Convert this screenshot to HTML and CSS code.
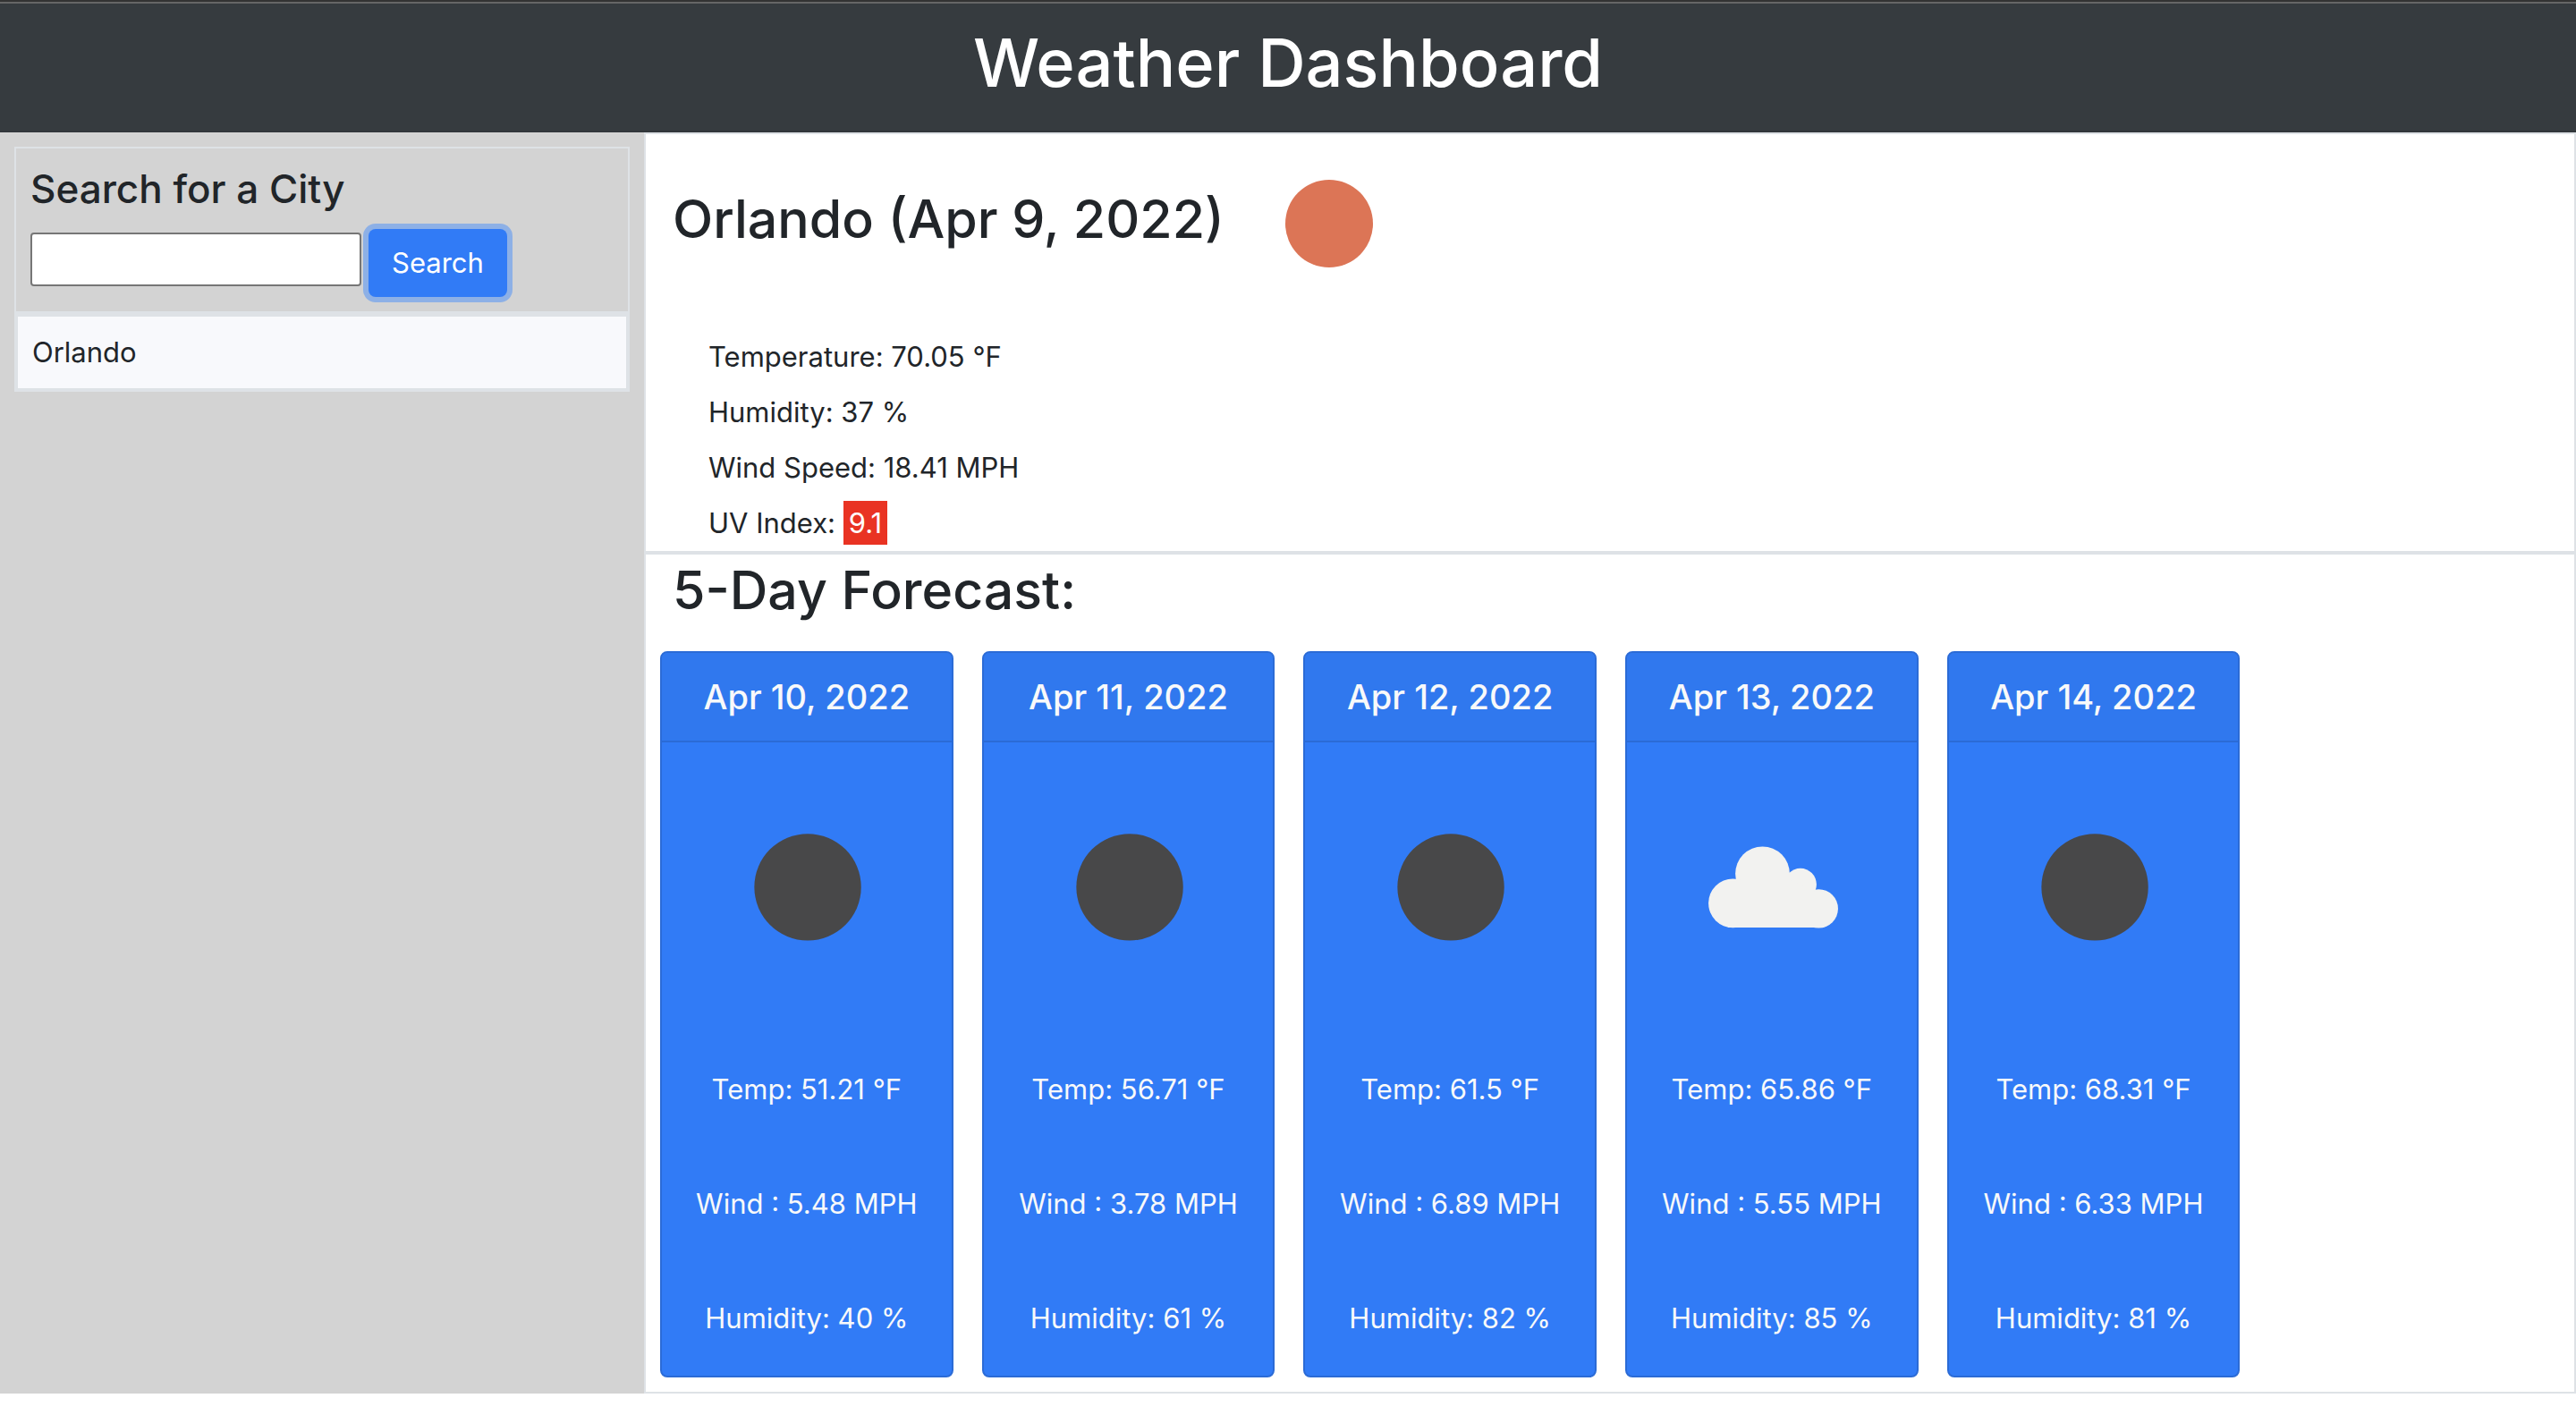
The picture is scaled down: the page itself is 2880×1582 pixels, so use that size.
FILE: index.html
```html
<!DOCTYPE html>
<html lang="en">
<head>
  <meta charset="utf-8">
  <meta name="viewport" content="width=device-width, initial-scale=1">
  <title>Weather Dashboard</title>
  <link rel="stylesheet" href="styles.css">
</head>
<body>
  <svg width="0" height="0" class="sprite" aria-hidden="true">
    <symbol id="disc" viewBox="0 0 200 200">
      <circle cx="101" cy="100" r="49"/>
    </symbol>
    <symbol id="cloud" viewBox="0 0 200 200">
      <g transform="translate(33.7 49.3) scale(.274)">
        <circle cx="211" cy="140" r="91"/>
        <circle cx="112" cy="239" r="82"/>
        <circle cx="338" cy="176" r="54"/>
        <circle cx="399" cy="257" r="65"/>
        <path d="M125 160H300L385 200V250L418 320H95L112 240Z"/>
      </g>
    </symbol>
  </svg>

  <header class="page-header">
    <h1>Weather Dashboard</h1>
  </header>

  <div class="layout">
    <aside class="sidebar">
      <form class="search">
        <label class="search-title" for="city">Search for a City</label>
        <div class="search-row">
          <input class="search-input" id="city" type="text">
          <button class="search-button" type="button">Search</button>
        </div>
      </form>
      <ul class="history">
        <li><button class="history-item" type="button">Orlando</button></li>
      </ul>
    </aside>

    <main class="content">
      <section class="current">
        <h2 class="city">Orlando (Apr 9, 2022) <svg class="city-icon clear-day" role="img" aria-label="Clear sky"><use href="#disc"/></svg></h2>
        <ul class="readings">
          <li>Temperature: 70.05 °F</li>
          <li>Humidity: 37 %</li>
          <li>Wind Speed: 18.41 MPH</li>
          <li>UV Index: <span class="uv">9.1</span></li>
        </ul>
      </section>

      <section class="forecast">
        <h2 class="forecast-title">5-Day Forecast:</h2>
        <div class="cards">
          <article class="card">
            <h3 class="card-header">Apr 10, 2022</h3>
            <div class="card-body">
              <svg class="card-icon clear-night" viewBox="0 0 200 200" role="img" aria-label="Clear sky"><use href="#disc"/></svg>
              <p>Temp: 51.21 °F</p>
              <p>Wind : 5.48 MPH</p>
              <p>Humidity: 40 %</p>
            </div>
          </article>
          <article class="card">
            <h3 class="card-header">Apr 11, 2022</h3>
            <div class="card-body">
              <svg class="card-icon clear-night" viewBox="0 0 200 200" role="img" aria-label="Clear sky"><use href="#disc"/></svg>
              <p>Temp: 56.71 °F</p>
              <p>Wind : 3.78 MPH</p>
              <p>Humidity: 61 %</p>
            </div>
          </article>
          <article class="card">
            <h3 class="card-header">Apr 12, 2022</h3>
            <div class="card-body">
              <svg class="card-icon clear-night" viewBox="0 0 200 200" role="img" aria-label="Clear sky"><use href="#disc"/></svg>
              <p>Temp: 61.5 °F</p>
              <p>Wind : 6.89 MPH</p>
              <p>Humidity: 82 %</p>
            </div>
          </article>
          <article class="card">
            <h3 class="card-header">Apr 13, 2022</h3>
            <div class="card-body">
              <svg class="card-icon clouds" viewBox="0 0 200 200" role="img" aria-label="Clouds"><use href="#cloud"/></svg>
              <p>Temp: 65.86 °F</p>
              <p>Wind : 5.55 MPH</p>
              <p>Humidity: 85 %</p>
            </div>
          </article>
          <article class="card">
            <h3 class="card-header">Apr 14, 2022</h3>
            <div class="card-body">
              <svg class="card-icon clear-night" viewBox="0 0 200 200" role="img" aria-label="Clear sky"><use href="#disc"/></svg>
              <p>Temp: 68.31 °F</p>
              <p>Wind : 6.33 MPH</p>
              <p>Humidity: 81 %</p>
            </div>
          </article>
        </div>
      </section>
    </main>
  </div>
</body>
</html>
```
FILE: styles.css
```css
* {
  box-sizing: border-box;
}

body {
  margin: 0;
  border-top: 2px solid #333333;
  background: #fff;
  color: #212529;
  font-family: Inter, "Liberation Sans", sans-serif;
  font-size: 31px;
  line-height: 48px;
}

h1, h2, h3, p, ul {
  margin: 0;
  padding: 0;
  font-weight: 400;
}

ul {
  list-style: none;
}

.sprite {
  position: absolute;
}

.page-header {
  padding: 18px 16px 28px;
  border-top: 2px solid #666666;
  border-bottom: 2px solid #32373b;
  background: #363b3f;
  color: #fff;
  text-align: center;
}

.page-header h1 {
  font-size: 74px;
  font-weight: 500;
  line-height: 96px;
}

.layout {
  display: grid;
  grid-template-columns: 1fr 3fr;
}

/* Sidebar */
.sidebar {
  padding: 16px;
  background: #d3d3d3;
}

.search {
  padding: 16px;
  border: 2px solid #dee2e6;
}

.search-title {
  display: block;
  margin-bottom: 16px;
  font-size: 44px;
  font-weight: 500;
  line-height: 58px;
}

.search-row {
  display: flex;
  align-items: flex-start;
  gap: 8px;
}

.search-input {
  width: 370px;
  height: 60px;
  margin: 4px 0;
  padding: 2px 4px;
  border: 2px solid #767676;
  border-radius: 4px;
  background: #fff;
  font: inherit;
}

.search-button {
  padding: 14px 26px;
  border: 0;
  border-radius: 8px;
  background: #317bf6;
  box-shadow: 0 0 0 6px #8db0e6;
  color: #fff;
  font: inherit;
}

.history {
  border: 2px solid #dee2e6;
}

.history-item {
  display: block;
  width: 100%;
  padding: 16px;
  border: 2px solid #dee2e6;
  background: #f8f9fc;
  color: inherit;
  font: inherit;
  text-align: left;
}

/* Current conditions */
.current,
.forecast {
  border: 2px solid #dee2e6;
}

.city {
  margin: 0 30px 18px;
  font-size: 59px;
  font-weight: 500;
  line-height: 72px;
}

.city-icon {
  width: 200px;
  height: 200px;
  vertical-align: middle;
}

.clear-day {
  fill: #dc7556;
}

.clear-night {
  fill: #484849;
}

.clouds {
  fill: #f2f2f0;
}

.readings {
  padding-left: 70px;
  line-height: 62px;
}

.uv {
  padding: 6px;
  background: #e93323;
  color: #fff;
}

/* Forecast */
.forecast-title {
  margin: 0 30px 28px;
  font-size: 59px;
  font-weight: 500;
  line-height: 80px;
}

.cards {
  display: grid;
  grid-template-columns: repeat(6, 1fr);
  gap: 32px;
  padding: 0 14px 16px 16px;
}

.card {
  border: 2px solid #2b6bd6;
  border-radius: 8px;
  background: #317bf6;
  color: #f8f9fa;
  text-align: center;
}

.card-header {
  padding: 24px 8px;
  border-bottom: 2px solid #2b6bd6;
  background: #3078ee;
  border-radius: 6px 6px 0 0;
  font-size: 38px;
  font-weight: 500;
  line-height: 50px;
}

.card-body {
  display: flex;
  flex-direction: column;
  align-items: center;
  gap: 80px;
  padding: 40px 16px;
}

.card-icon {
  width: calc(100% - 48px);
}
```
